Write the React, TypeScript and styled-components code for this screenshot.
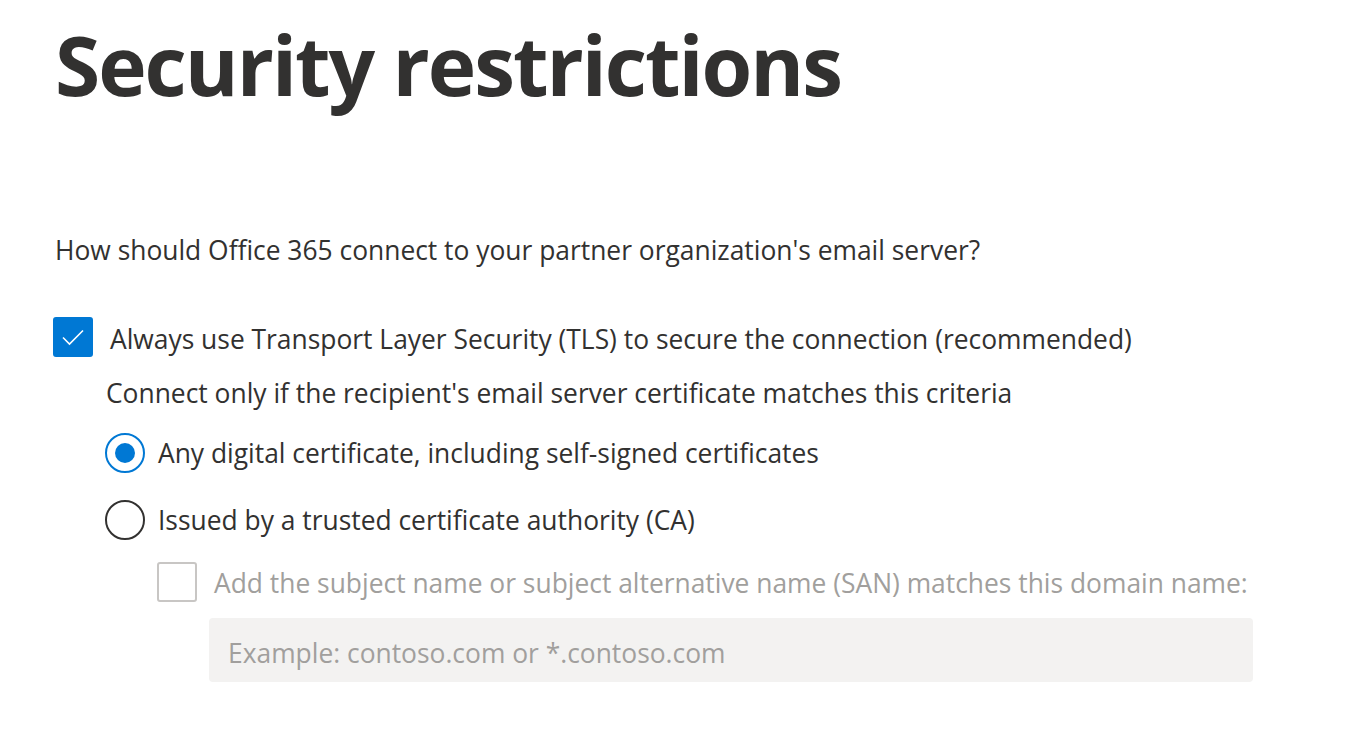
import React from "react";
import styled, { createGlobalStyle } from "styled-components";

const Global = createGlobalStyle`
  html, body { margin: 0; padding: 0; background: #fff; }
  body { font-family: "Open Sans", "Noto Sans", sans-serif; color: #323130; }
`;

const Page = styled.div`
  padding: 14px 0 0 55px;
  display: flex;
  flex-direction: column;
`;

const Title = styled.h1`
  margin: 0;
  font-size: 82px;
  font-weight: 700;
  line-height: 100px;
  letter-spacing: -2px;
  color: #323130;
`;

const Question = styled.p`
  margin: 120px 0 0 0;
  font-size: 26.4px;
  line-height: 32px;
`;

const Row = styled.label<{ $indent?: number; $top?: number; $gap?: number }>`
  display: flex;
  align-items: center;
  gap: ${(p) => p.$gap ?? 17}px;
  margin-left: ${(p) => (p.$indent ?? 0) - 2}px;
  margin-top: ${(p) => p.$top ?? 0}px;
  font-size: 26.4px;
  line-height: 32px;
`;

const Box = styled.span<{ $checked?: boolean }>`
  width: 40px;
  height: 40px;
  box-sizing: border-box;
  border-radius: 3px;
  flex: none;
  display: flex;
  align-items: center;
  justify-content: center;
  background: ${(p) => (p.$checked ? "#0078d4" : "#fff")};
  border: 2px solid ${(p) => (p.$checked ? "#0078d4" : "#c8c6c4")};
`;

const Radio = styled.span<{ $checked?: boolean }>`
  width: 40px;
  height: 40px;
  box-sizing: border-box;
  border-radius: 50%;
  flex: none;
  display: flex;
  align-items: center;
  justify-content: center;
  border: 2px solid ${(p) => (p.$checked ? "#0078d4" : "#323130")};
  &::after {
    content: "";
    display: ${(p) => (p.$checked ? "block" : "none")};
    width: 20px;
    height: 20px;
    border-radius: 50%;
    background: #0078d4;
  }
`;

const Label = styled.span<{ $disabled?: boolean; $shift?: number }>`
  color: ${(p) => (p.$disabled ? "#a19f9d" : "#323130")};
  padding-top: ${(p) => p.$shift ?? 0}px;
`;

const Sub = styled.p`
  margin: 20px 0 0 51px;
  font-size: 26.4px;
  line-height: 32px;
`;

const Input = styled.div`
  margin: 16px 0 0 154px;
  width: 1044px;
  height: 64px;
  box-sizing: border-box;
  background: #f3f2f1;
  border-radius: 4px;
  padding: 5px 0 0 19px;
  display: flex;
  align-items: center;
  font-size: 26.4px;
  color: #a19f9d;
`;

export default function App() {
  return (
    <>
      <Global />
      <Page>
        <Title>Security restrictions</Title>
        <Question>How should Office 365 connect to your partner organization's email server?</Question>
        <Row $top={51}>
          <Box $checked>
            <svg width="24" height="18" viewBox="0 0 24 18">
              <path d="M2 9.5 L8.5 16 L22 2.5" fill="none" stroke="#fff" strokeWidth="1.6" />
            </svg>
          </Box>
          <Label $shift={3}>Always use Transport Layer Security (TLS) to secure the connection (recommended)</Label>
        </Row>
        <Sub>Connect only if the recipient's email server certificate matches this criteria</Sub>
        <Row $indent={52} $top={24} $gap={13}>
          <Radio $checked />
          <Label>Any digital certificate, including self-signed certificates</Label>
        </Row>
        <Row $indent={52} $top={27} $gap={13}>
          <Radio />
          <Label>Issued by a trusted certificate authority (CA)</Label>
        </Row>
        <Row $indent={104} $top={22}>
          <Box />
          <Label $disabled $shift={2}>Add the subject name or subject alternative name (SAN) matches this domain name:</Label>
        </Row>
        <Input>Example: contoso.com or *.contoso.com</Input>
      </Page>
    </>
  );
}
